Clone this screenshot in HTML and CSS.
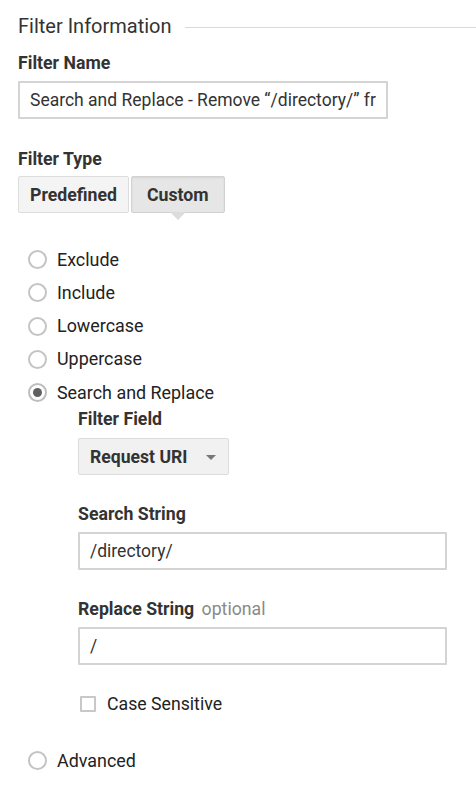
FILE: index.html
```html
<!DOCTYPE html>
<html lang="en">
<head>
<meta charset="utf-8">
<title>Filter Information</title>
<link rel="stylesheet" href="styles.css">
</head>
<body>
<div class="page">
  <div class="section-title">
    <span class="section-title-text">Filter Information</span>
    <span class="section-title-rule"></span>
  </div>

  <div class="field-label first">Filter Name</div>
  <input class="text-input name-input" type="text" value="Search and Replace - Remove “/directory/” from Request URI">

  <div class="field-label gap type-label">Filter Type</div>
  <div class="toggle-group">
    <button class="toggle-btn">Predefined</button>
    <button class="toggle-btn active">Custom</button>
  </div>

  <ul class="radio-list">
    <li class="radio-row"><span class="radio"></span><span class="radio-label">Exclude</span></li>
    <li class="radio-row"><span class="radio"></span><span class="radio-label">Include</span></li>
    <li class="radio-row"><span class="radio"></span><span class="radio-label">Lowercase</span></li>
    <li class="radio-row"><span class="radio"></span><span class="radio-label">Uppercase</span></li>
    <li class="radio-item">
      <div class="radio-row"><span class="radio checked"></span><span class="radio-label">Search and Replace</span></div>
      <div class="sub-form">
        <div class="field-label">Filter Field</div>
        <div class="select">
          <span class="select-text">Request URI</span>
          <span class="select-arrow"></span>
        </div>

        <div class="field-label gap">Search String</div>
        <input class="text-input wide" type="text" value="/directory/">

        <div class="field-label gap">Replace String <span class="optional">optional</span></div>
        <input class="text-input wide" type="text" value="/">

        <div class="checkbox-row">
          <span class="checkbox"></span>
          <span class="checkbox-label">Case Sensitive</span>
        </div>
      </div>
    </li>
    <li class="radio-row advanced"><span class="radio"></span><span class="radio-label">Advanced</span></li>
  </ul>
</div>
</body>
</html>
```
FILE: styles.css
```css
* { box-sizing: border-box; }

html, body {
  margin: 0;
  padding: 0;
  background: #ffffff;
}

body {
  font-family: Roboto, "Liberation Sans", Arial, sans-serif;
  color: #222222;
  font-size: 17.7px;
}

.page {
  padding: 15px 0 0 18px;
}

.section-title {
  display: flex;
  align-items: center;
  height: 22px;
}

.section-title-text {
  font-size: 20px;
  line-height: 22px;
  color: #333333;
  white-space: nowrap;
}

.section-title-rule {
  flex: 1;
  height: 1px;
  background: #d9d9d9;
  margin-left: 13px;
  margin-top: 2px;
}

.field-label {
  font-size: 17.7px;
  line-height: 20px;
  font-weight: 700;
  color: #333333;
  margin-bottom: 8px;
}

.field-label.first { margin-top: 16px; }
.field-label.gap { margin-top: 29px; }
.field-label.type-label { margin-top: 30px; margin-bottom: 7px; }

.optional {
  font-weight: 400;
  color: #8a8a8a;
  margin-left: 3px;
}

.text-input {
  display: block;
  height: 38px;
  border: 2px solid #d4d4d4;
  border-radius: 1px;
  background: #ffffff;
  font-family: Roboto, "Liberation Sans", Arial, sans-serif;
  font-size: 17.5px;
  color: #333333;
  padding: 0 10px 0 10px;
  margin: 0;
  outline: none;
}

.name-input { width: 370px; }
.text-input.wide { width: 369px; }

.toggle-group {
  display: flex;
  gap: 2px;
}

.toggle-btn {
  position: relative;
  height: 37px;
  padding: 0 11px;
  font-family: Roboto, "Liberation Sans", Arial, sans-serif;
  font-size: 17.7px;
  font-weight: 700;
  color: #333333;
  background: #f4f4f4;
  border: 1px solid #dddddd;
  border-radius: 2px;
  margin: 0;
}

.toggle-btn.active {
  background: #e6e6e6;
  border-color: #d2d2d2;
  box-shadow: inset 0 1px 2px rgba(0, 0, 0, 0.08);
  padding: 0 15px;
}

.toggle-btn.active::after {
  content: "";
  position: absolute;
  left: 50%;
  top: 100%;
  margin-left: -8px;
  border-left: 8px solid transparent;
  border-right: 8px solid transparent;
  border-top: 8px solid #dcdcdc;
}

.radio-list {
  list-style: none;
  margin: 30px 0 0 0;
  padding: 0 0 0 10px;
}

.radio-row {
  display: flex;
  align-items: center;
  height: 33.25px;
}

.radio {
  width: 19px;
  height: 19px;
  border: 2px solid #c4c4c4;
  border-radius: 50%;
  position: relative;
  flex: none;
  background: #ffffff;
}

.radio.checked {
  border-color: #bdbdbd;
}

.radio.checked::after {
  content: "";
  position: absolute;
  left: 50%;
  top: 50%;
  width: 9px;
  height: 9px;
  margin: -4.5px 0 0 -4.5px;
  border-radius: 50%;
  background: #616161;
}

.radio-label {
  margin-left: 10px;
  font-size: 17.9px;
  line-height: 20px;
  color: #222222;
}

.sub-form {
  padding-left: 50px;
}

.select {
  display: flex;
  align-items: center;
  justify-content: space-between;
  width: 151px;
  height: 37px;
  margin-top: 9px;
  padding: 0 12px 0 11px;
  background: #f1f1f1;
  border: 1px solid #dcdcdc;
  border-radius: 2px;
}

.sub-form > .field-label:first-child { margin-bottom: 0; }

.select-text {
  font-size: 17.6px;
  font-weight: 700;
  color: #333333;
}

.select-arrow {
  width: 0;
  height: 0;
  border-left: 5px solid transparent;
  border-right: 5px solid transparent;
  border-top: 5px solid #777777;
  margin-top: 2px;
}

.checkbox-row {
  display: flex;
  align-items: center;
  height: 20px;
  margin-top: 29px;
  padding-left: 2px;
}

.checkbox {
  width: 16px;
  height: 16px;
  border: 2px solid #c8c8c8;
  border-radius: 1px;
  flex: none;
}

.checkbox-label {
  margin-left: 11px;
  font-size: 17.7px;
  line-height: 20px;
  color: #222222;
}

.radio-row.advanced {
  margin-top: 30px;
}
```
